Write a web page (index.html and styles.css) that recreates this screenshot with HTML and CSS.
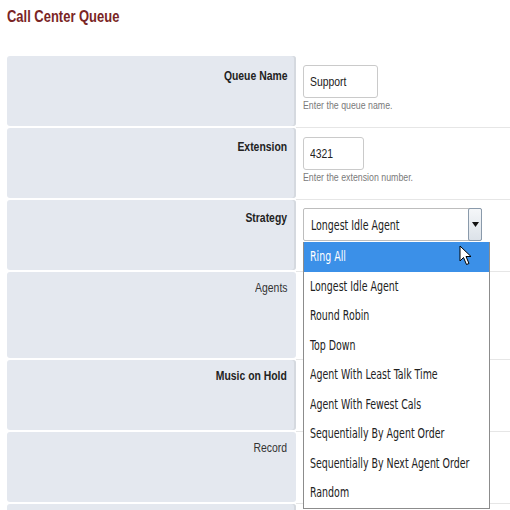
FILE: index.html
```html
<!DOCTYPE html>
<html>
<head>
<meta charset="utf-8">
<link rel="stylesheet" href="styles.css">
</head>
<body>
<div class="page">
  <h1 class="title"><span>Call Center Queue</span></h1>
  <div class="form">
    <div class="row">
      <div class="label pt12"><span>Queue Name</span></div>
      <div class="field">
        <div class="input w75"><span>Support</span></div>
        <div class="hint"><span>Enter the queue name.</span></div>
      </div>
    </div>
    <div class="row">
      <div class="label pt11"><span>Extension</span></div>
      <div class="field">
        <div class="input w61"><span>4321</span></div>
        <div class="hint"><span>Enter the extension number.</span></div>
      </div>
    </div>
    <div class="row">
      <div class="label pt10"><span>Strategy</span></div>
      <div class="field">
        <div class="select-wrap">
          <div class="select">
            <span class="select-text"><span>Longest Idle Agent</span></span>
            <span class="select-btn"><svg width="7" height="5" viewBox="0 0 7 5"><path d="M0 0H7L3.5 5Z" fill="#111"/></svg></span>
          </div>
          <ul class="dropdown">
            <li class="active"><span>Ring All</span></li>
            <li><span>Longest Idle Agent</span></li>
            <li><span>Round Robin</span></li>
            <li><span>Top Down</span></li>
            <li><span>Agent With Least Talk Time</span></li>
            <li><span>Agent With Fewest Cals</span></li>
            <li><span>Sequentially By Agent Order</span></li>
            <li><span>Sequentially By Next Agent Order</span></li>
            <li><span>Random</span></li>
          </ul>
          <svg class="cursor" width="13" height="21" viewBox="0 0 13 21"><path d="M1 1V16L4.5 12.5L7.5 19.5L10 18.5L7 11.5H12Z" fill="#fff" stroke="#000" stroke-width="1" stroke-linejoin="round"/></svg>
        </div>
      </div>
    </div>
    <div class="row tall">
      <div class="label light"><span>Agents</span></div>
      <div class="field"></div>
    </div>
    <div class="row">
      <div class="label"><span>Music on Hold</span></div>
      <div class="field"></div>
    </div>
    <div class="row">
      <div class="label light"><span>Record</span></div>
      <div class="field"></div>
    </div>
    <div class="row">
      <div class="label"></div>
      <div class="field"></div>
    </div>
  </div>
</div>
</body>
</html>
```
FILE: styles.css
```css
html, body {
  margin: 0;
  padding: 0;
  background: #fff;
  height: 510px;
  overflow: hidden;
}
.page {
  padding: 0 0 0 7px;
  font-family: "Liberation Sans", Arial, sans-serif;
}
.title {
  margin: 0;
  padding-top: 7px;
  height: 56px;
  box-sizing: border-box;
  font-size: 16px;
  line-height: 20px;
  font-weight: bold;
  color: #7a2525;
}
.title span {
  display: inline-block;
  transform: scaleX(0.81);
  transform-origin: left center;
  white-space: nowrap;
}
.row {
  display: grid;
  grid-template-columns: 289px 1fr;
  height: 72px;
}
.row.tall {
  height: 88px;
}
.label {
  margin-bottom: 2px;
  background: #e4e8ef;
  border-radius: 3px;
  box-shadow: inset -2px 0 0 #d5d9df;
  padding: 8px 9px 0 0;
  text-align: right;
  font-size: 13px;
  line-height: 16px;
  font-weight: bold;
  color: #222;
}
.label span {
  display: inline-block;
  transform: scaleX(0.8);
  transform-origin: right center;
  white-space: nowrap;
}
.label.pt12 { padding-top: 12px; }
.label.pt11 { padding-top: 11px; }
.label.pt10 { padding-top: 10px; }
.label.light {
  font-weight: normal;
  color: #333;
  box-shadow: none;
}
.field {
  border-bottom: 1px solid #e6e6e6;
  padding: 9px 0 0 7px;
  position: relative;
}
.input {
  height: 33px;
  box-sizing: border-box;
  border: 1px solid #cacaca;
  border-radius: 3px;
  font-size: 13px;
  line-height: 31px;
  padding-left: 6px;
  color: #222;
}
.input span,
.hint span {
  display: inline-block;
  transform: scaleX(0.8);
  transform-origin: left center;
  white-space: nowrap;
}
.w75 { width: 75px; }
.w61 { width: 61px; }
.hint {
  margin-top: 1px;
  font-size: 11px;
  line-height: 13px;
  color: #7a7a7a;
}
.select-wrap {
  position: relative;
  width: 179px;
  margin-top: -1px;
}
.select {
  height: 33px;
  box-sizing: border-box;
  border: 1px solid #bdbdbd;
  border-radius: 2px;
  display: flex;
  align-items: center;
  padding-left: 7px;
  font-family: "DejaVu Sans Condensed", "DejaVu Sans", sans-serif;
  font-size: 14px;
  color: #222;
}
.select-text {
  flex: 1;
  overflow: hidden;
}
.select-text span,
.dropdown li span {
  display: inline-block;
  transform: scaleX(0.75);
  transform-origin: left center;
  white-space: nowrap;
}
.select-btn {
  width: 14px;
  height: 33px;
  margin-right: -1px;
  box-sizing: border-box;
  border: 1px solid #8a9aab;
  border-radius: 2px;
  background: linear-gradient(#f5f7f9, #dce2e9);
  display: flex;
  align-items: center;
  justify-content: center;
}
.dropdown {
  position: absolute;
  left: 0;
  top: 34px;
  width: 187px;
  margin: 0;
  padding: 0;
  list-style: none;
  background: #fff;
  border: 1px solid #8c8c8c;
  border-top: none;
  box-sizing: border-box;
  font-family: "DejaVu Sans Condensed", "DejaVu Sans", sans-serif;
  font-size: 14px;
  color: #222;
  z-index: 2;
}
.dropdown li {
  height: 29.5px;
  line-height: 29px;
  padding-left: 6px;
  white-space: nowrap;
}
.dropdown li.active {
  background: #3b90e8;
  color: #fff;
}
.cursor {
  position: absolute;
  left: 156px;
  top: 37px;
  z-index: 3;
}
```
